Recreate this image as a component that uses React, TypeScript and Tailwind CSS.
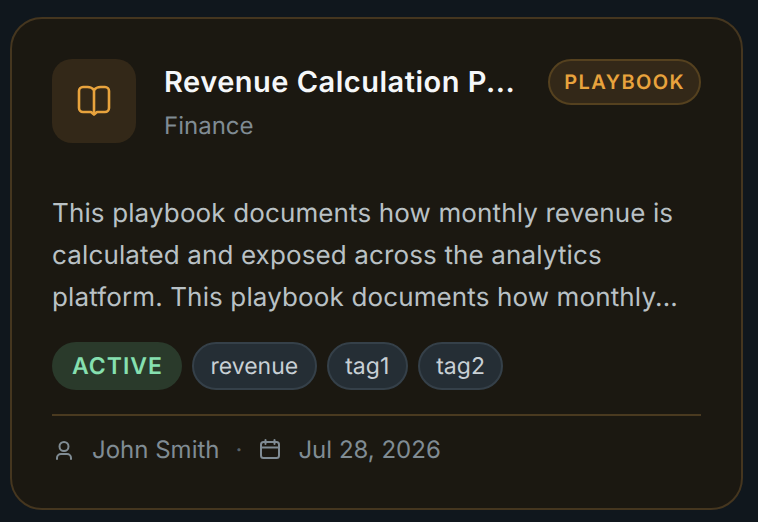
const Book = () => (
  <svg width="40" height="40" viewBox="0 0 40 40" fill="none" stroke="#e8a33d" strokeWidth="2.6" strokeLinecap="round" strokeLinejoin="round">
    <path d="M20 9c-1.500-2-4-3-6.500-3H9a4 4 0 0 0-4 4v17a4 4 0 0 0 4 4h8l3 2.500 3-2.500h8a4 4 0 0 0 4-4V10a4 4 0 0 0-4-4h-4.500C24 6 21.500 7 20 9Z" />
    <path d="M20 9v24" />
  </svg>
);
const User = () => (
  <svg width="24" height="24" viewBox="0 0 24 24" fill="none" stroke="#808c94" strokeWidth="2" strokeLinecap="round" strokeLinejoin="round">
    <circle cx="12" cy="8.500" r="4.500" />
    <path d="M5 21v-1a4 4 0 0 1 4-4h6a4 4 0 0 1 4 4v1" />
  </svg>
);
const Cal = () => (
  <svg width="24" height="24" viewBox="0 0 24 24" fill="none" stroke="#808c94" strokeWidth="2" strokeLinecap="round" strokeLinejoin="round">
    <rect x="3" y="4" width="18" height="16" rx="2.500" />
    <path d="M3 9.500h18M7.500 2v4M16.500 2v4" />
  </svg>
);
const tags = ["revenue", "tag1", "tag2"];
export default function App() {
  return (
    <div className="h-[522px] w-[758px] bg-[#10171d] pl-2.5 pt-[17px] font-['Inter',sans-serif] antialiased [text-rendering:geometricPrecision]">
      <div className="box-border h-[493px] w-[733px] rounded-[32px] border-2 border-[#45361f] bg-[#1b1811] px-10 pt-10">
        <div className="flex items-start">
          <div className="flex h-[84px] w-[84px] shrink-0 items-center justify-center rounded-[20px] bg-[#332818]">
            <Book />
          </div>
          <div className="ml-7 shrink-0">
            <div className="text-[29px] leading-[46px] font-semibold tracking-[0.5px] whitespace-nowrap text-[#f5f7f9]">Revenue Calculation P...</div>
            <div className="mt-[3px] text-[24px] leading-[36px] text-[#808c94]">Finance</div>
          </div>
          <div className="ml-auto flex h-[46px] items-center rounded-full border-2 border-[#55411f] bg-[#332818] px-[14px] text-[20px] font-semibold tracking-[1.4px] text-[#e8a33d]">
            PLAYBOOK
          </div>
        </div>
        <p className="mt-[49px] text-[26px] leading-[42px] tracking-[0.13px] text-[#b9c1c5]">
          This playbook documents how monthly revenue is calculated and exposed across the analytics platform. This playbook documents how monthly...
        </p>
        <div className="mt-[23px] flex gap-[10px]">
          <span className="flex h-[48px] items-center rounded-full bg-[#2a3a2b] pr-[19px] pl-[20px] text-[23px] font-semibold tracking-[1px] text-[#86e0b0]">ACTIVE</span>
          {tags.map((t) => (
            <span key={t} className="flex h-[48px] items-center rounded-full border-2 border-[#354049] bg-[#252e35] px-[16.5px] text-[23px] text-[#c8d0d5]">{t}</span>
          ))}
        </div>
        <div className="mt-6 flex items-center border-t-2 border-[#4a3a20] pt-4 text-[24px] leading-[36px] text-[#808c94]">
          <User />
          <span className="ml-[16px]">John Smith</span>
          <span className="mx-[16px] text-[#566069]">·</span>
          <Cal />
          <span className="ml-[16px]">Jul 28, 2026</span>
        </div>
      </div>
    </div>
  );
}
